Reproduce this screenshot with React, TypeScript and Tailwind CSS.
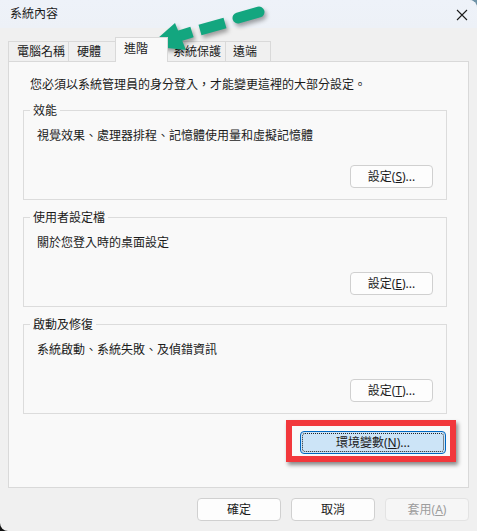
import React from "react";

const font = "font-['Noto_Sans','Noto_Sans_CJK_TC',sans-serif]";

function Btn({
  children,
  disabled,
  className = "",
}: {
  children: React.ReactNode;
  disabled?: boolean;
  className?: string;
}) {
  return (
    <div
      className={`h-[23px] w-[83px] flex items-center justify-center rounded-[4px] border text-[12px] leading-none ${
        disabled
          ? "border-[#e3e3e3] bg-[#f6f6f6] text-[#9d9d9d]"
          : "border-[#d0d0d0] bg-[#fdfdfd] text-[#1b1b1b]"
      } ${className}`}
    >
      {children}
    </div>
  );
}

function Group({
  title,
  desc,
  btn,
  className = "",
}: {
  title: string;
  desc: string;
  btn: React.ReactNode;
  className?: string;
}) {
  return (
    <div className={`border border-[#dcdcdc] w-[424px] flex flex-col ${className}`}>
      <div className="-mt-[8px] ml-[6px] px-[3px] w-fit bg-[#f9f9f9] leading-[16px]">{title}</div>
      <div className="mt-[8px] pl-[13px] leading-[18px]">{desc}</div>
      <div className="mt-[20px] mb-[11px] mr-[13px] flex justify-end">
        <Btn>{btn}</Btn>
      </div>
    </div>
  );
}

function Tab({
  label,
  w,
  pl,
  active,
}: {
  label: string;
  w: string;
  pl: string;
  active?: boolean;
}) {
  return (
    <div
      className={`${w} ${pl} flex items-center border-t border-l border-r border-[#d9d9d9] -mr-px ${
        active
          ? "h-[25px] bg-[#f9f9f9] -mb-px relative z-10 pb-[2px]"
          : "h-[20px] bg-[#f0f0f0]"
      }`}
    >
      {label}
    </div>
  );
}

export default function App() {
  return (
    <div className={`w-[477px] h-[531px] bg-gradient-to-bl from-[#6f93a8] via-[#3b4a55] to-[#111111] ${font} text-[12px] text-[#1b1b1b] relative overflow-hidden`}>
      <div className="w-full h-full flex flex-col bg-[#f0f0f0] rounded-tr-[8px] rounded-bl-[8px] overflow-hidden">
        {/* Title bar */}
        <div className="h-[28px] shrink-0 bg-gradient-to-b from-[#eef2f9] to-[#edf1f7] flex items-center justify-between pl-[10px] pr-[9px]">
          <span className="leading-none">系統內容</span>
          <svg width="12" height="12" viewBox="0 0 12 12" className="mt-[1px]">
            <path d="M1 1 L11 11 M11 1 L1 11" stroke="#1b1b1b" strokeWidth="1.1" />
          </svg>
        </div>

        {/* Body */}
        <div className="flex-1 flex flex-col px-[8px] pt-[9px]">
          <div className="flex items-end h-[24px]">
            <Tab label="電腦名稱" w="w-[61px]" pl="pl-[8px]" />
            <Tab label="硬體" w="w-[48px]" pl="pl-[8px]" />
            <Tab label="進階" w="w-[53px]" pl="pl-[8px]" active />
            <Tab label="系統保護" w="w-[59px]" pl="pl-[5px]" />
            <Tab label="遠端" w="w-[46px]" pl="pl-[7px]" />
          </div>

          <div className="h-[427px] border border-[#d9d9d9] bg-[#f9f9f9] flex flex-col pl-[14px] pt-[14px]">
            <div className="leading-[18px] pl-[7px]">您必須以系統管理員的身分登入，才能變更這裡的大部分設定。</div>

            <Group
              className="mt-[16px]"
              title="效能"
              desc="視覺效果、處理器排程、記憶體使用量和虛擬記憶體"
              btn={<>設定(<span className="underline">S</span>)...</>}
            />
            <Group
              className="mt-[17px]"
              title="使用者設定檔"
              desc="關於您登入時的桌面設定"
              btn={<>設定(<span className="underline">E</span>)...</>}
            />
            <Group
              className="mt-[17px]"
              title="啟動及修復"
              desc="系統啟動、系統失敗、及偵錯資訊"
              btn={<>設定(<span className="underline">T</span>)...</>}
            />

            <div className="mt-[17px] mr-[22px] flex justify-end">
              <div className="relative">
                <div className="relative h-[23px] w-[146px] flex items-center justify-center rounded-[4px] border border-[#0067c0] bg-[#cce4f7] leading-none">
                  <div className="absolute inset-[1px] border border-dotted border-[#222] rounded-[3px]" />
                  環境變數(<span className="underline">N</span>)...
                </div>
                <div className="absolute -left-[14px] -right-[10px] -top-[11px] -bottom-[8px] border-[6px] border-[#f2383c] shadow-[2px_3px_4px_rgba(0,0,0,0.45)] pointer-events-none" />
              </div>
            </div>
          </div>

          <div className="mt-[10px] flex justify-end gap-[10px]">
            <Btn className="w-[84px]">確定</Btn>
            <Btn className="w-[84px]">取消</Btn>
            <Btn className="w-[84px]" disabled>
              套用(<span className="underline">A</span>)
            </Btn>
          </div>
        </div>
      </div>

      {/* Green dashed arrow annotation */}
      <svg
        className="absolute left-0 top-0 pointer-events-none drop-shadow-[2px_3px_2px_rgba(0,0,0,0.35)]"
        width="477"
        height="70"
        viewBox="0 0 477 70"
      >
        <g stroke="#13a67f" strokeWidth="11" strokeLinecap="round" fill="none">
          <path d="M176 37 L192 32" strokeLinecap="butt" />
          <path d="M200 30 L225 23" strokeLinecap="butt" />
          <path d="M238 18 L259 12" />
        </g>
        <polygon points="149,46 175,23 186,50" fill="#13a67f" />
      </svg>
    </div>
  );
}
